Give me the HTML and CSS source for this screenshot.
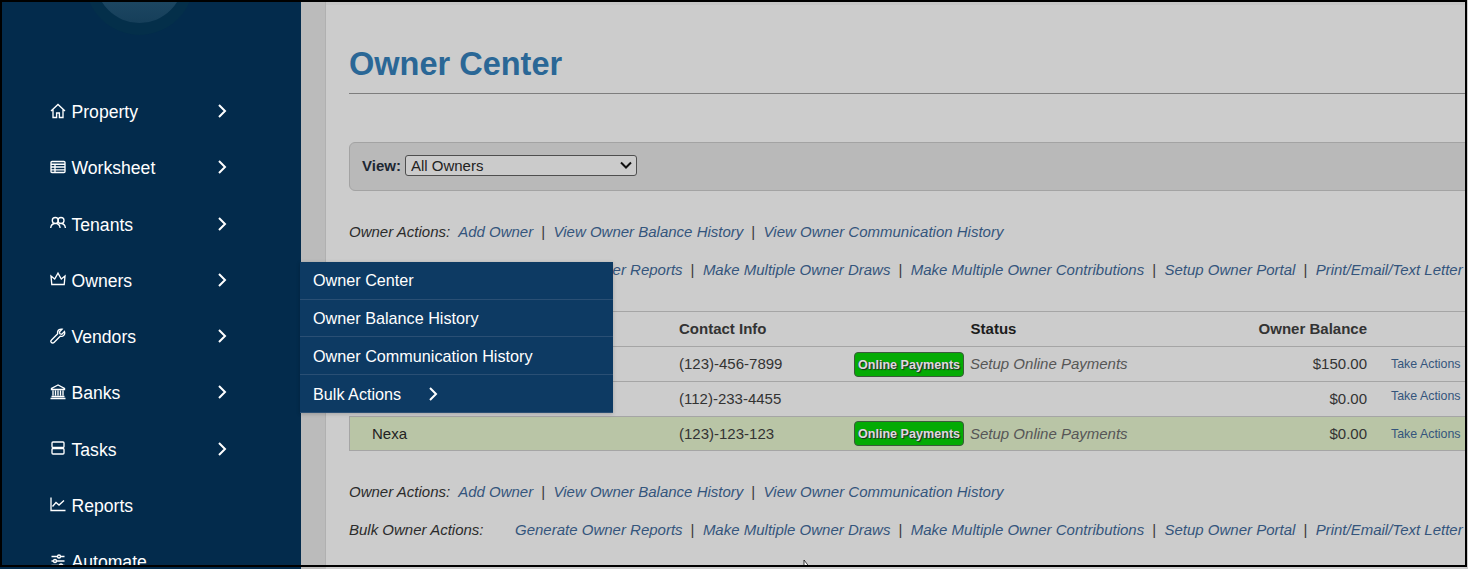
FILE: index.html
```html
<!DOCTYPE html>
<html lang="en">
<head>
<meta charset="utf-8">
<title>Owner Center</title>
<link rel="stylesheet" href="styles.css">
</head>
<body>
<div class="frame">
  <aside class="sidebar">
    <div class="logo">
      <svg class="logo-mark" width="299" height="82" viewBox="0 0 299 82">
        <defs><linearGradient id="disc" x1="0" y1="0" x2="0" y2="1"><stop offset=".5" stop-color="#234e6a"/><stop offset="1" stop-color="#163f5a"/></linearGradient></defs>
        <circle cx="137.500" cy="-21.400" r="54.400" fill="#042f4a"/>
        <circle cx="137.500" cy="-23" r="44" fill="url(#disc)"/>
      </svg>
    </div>
    <nav class="nav">
      <a class="nav-item"><span class="nav-label"><svg class="nav-icon" viewBox="0 0 16 16"><path d="M1 8 8 1.500 15 8M3 6.200V14.500h3.600V10h2.800v4.500H13V6.200"/></svg>Property</span><svg class="chev" viewBox="0 0 10 16"><path d="M2 2l6 6-6 6"/></svg></a>
      <a class="nav-item"><span class="nav-label"><svg class="nav-icon" viewBox="0 0 16 16"><rect x="1" y="2.500" width="14" height="11" rx="1"/><path d="M1 5.200h14M1 8h14M1 10.800h14M5 5.200v8.300"/></svg>Worksheet</span><svg class="chev" viewBox="0 0 10 16"><path d="M2 2l6 6-6 6"/></svg></a>
      <a class="nav-item"><span class="nav-label"><svg class="nav-icon" viewBox="0 0 16 16"><circle cx="5.300" cy="5.500" r="3"/><circle cx="11" cy="5.500" r="3"/><path d="M.7 13c.3-2.600 1.800-4.200 3.800-4.500M6.500 8.500c1.900.3 3.300 1.900 3.600 4.500M11.800 8.500c1.900.3 3.300 1.900 3.600 4.500"/></svg>Tenants</span><svg class="chev" viewBox="0 0 10 16"><path d="M2 2l6 6-6 6"/></svg></a>
      <a class="nav-item"><span class="nav-label"><svg class="nav-icon" viewBox="0 0 16 16"><path d="M1 5l.8 8.500h12.400L15 5l-3.700 3L8 2.200 4.700 8z"/></svg>Owners</span><svg class="chev" viewBox="0 0 10 16"><path d="M2 2l6 6-6 6"/></svg></a>
      <a class="nav-item"><span class="nav-label"><svg class="nav-icon" viewBox="0 0 16 16"><path d="M14.500 3.600 11.800 6.300 9.900 5.800 9.400 3.900 12.100 1.200C10 .700 8 1.800 7.600 3.800c-.1.700 0 1.300.1 1.900L1.500 11.900c-.8.800-.8 1.900-.1 2.600s1.800.7 2.600-.1l6.200-6.200c.6.200 1.300.2 1.900.1 2-.4 3.100-2.600 2.400-4.700z"/></svg>Vendors</span><svg class="chev" viewBox="0 0 10 16"><path d="M2 2l6 6-6 6"/></svg></a>
      <a class="nav-item"><span class="nav-label"><svg class="nav-icon" viewBox="0 0 16 16"><path d="M8 1 1.500 4.500v1h13v-1zM3 6.500v5M5.500 6.500v5M8 6.500v5M10.500 6.500v5M13 6.500v5M1.500 12.500h13M.5 14.500h15"/></svg>Banks</span><svg class="chev" viewBox="0 0 10 16"><path d="M2 2l6 6-6 6"/></svg></a>
      <a class="nav-item"><span class="nav-label"><svg class="nav-icon" viewBox="0 0 16 16"><rect x="2" y="2" width="12" height="5.500" rx="1"/><rect x="2" y="8.500" width="12" height="5.500" rx="1"/></svg>Tasks</span><svg class="chev" viewBox="0 0 10 16"><path d="M2 2l6 6-6 6"/></svg></a>
      <a class="nav-item"><span class="nav-label"><svg class="nav-icon" viewBox="0 0 16 16"><path d="M1 1.500v13h14.500M2.500 10.500 6 6.500l3 2.500 5-4.500"/></svg>Reports</span></a>
      <a class="nav-item"><span class="nav-label"><svg class="nav-icon" viewBox="0 0 16 16"><path d="M1.500 3.500h6M10.500 3.500h4M1.500 8h2M6.500 8h8M1.500 12.500h8M12.500 12.500h2"/><circle cx="9" cy="3.500" r="1.500"/><circle cx="5" cy="8" r="1.500"/><circle cx="11" cy="12.500" r="1.500"/></svg>Automate</span></a>
    </nav>
  </aside>
  <div class="gutter"></div>
  <main class="main">
    <div class="page">
      <h1 class="title">Owner Center</h1>
      <div class="view-bar">
        <label class="view-label" for="view">View:</label>
        <span class="select-wrap">
          <select class="view-select" id="view"><option>All Owners</option></select>
          <svg class="select-arrow" width="12" height="8" viewBox="0 0 12 8"><path d="M1 1.500l5 5 5-5"/></svg>
        </span>
      </div>
      <div class="actions-block">
        <p class="action-line"><span class="action-label">Owner Actions:</span><a class="action-link">Add Owner</a><span class="sep">|</span><a class="action-link">View Owner Balance History</a><span class="sep">|</span><a class="action-link">View Owner Communication History</a></p>
        <p class="action-line"><span class="action-label bulk">Bulk Owner Actions:</span><a class="action-link">Generate Owner Reports</a><span class="sep">|</span><a class="action-link">Make Multiple Owner Draws</a><span class="sep">|</span><a class="action-link">Make Multiple Owner Contributions</a><span class="sep">|</span><a class="action-link">Setup Owner Portal</a><span class="sep">|</span><a class="action-link">Print/Email/Text Letter</a></p>
      </div>
      <div class="table">
        <div class="row head">
          <div class="cell-name"></div>
          <div class="cell-contact">Contact Info</div>
          <div class="cell-status">Status</div>
          <div class="cell-balance">Owner Balance</div>
          <div class="cell-actions"></div>
        </div>
        <div class="row upper">
          <div class="cell-name"></div>
          <div class="cell-contact">(123)-456-7899</div>
          <div class="cell-status"><span class="pay-btn">Online Payments</span><em class="setup">Setup Online Payments</em></div>
          <div class="cell-balance">$150.00</div>
          <div class="cell-actions"><a>Take Actions</a></div>
        </div>
        <div class="row nudged">
          <div class="cell-name"></div>
          <div class="cell-contact">(112)-233-4455</div>
          <div class="cell-status"></div>
          <div class="cell-balance">$0.00</div>
          <div class="cell-actions raised"><a>Take Actions</a></div>
        </div>
        <div class="row selected">
          <div class="cell-name">Nexa</div>
          <div class="cell-contact">(123)-123-123</div>
          <div class="cell-status"><span class="pay-btn">Online Payments</span><em class="setup">Setup Online Payments</em></div>
          <div class="cell-balance">$0.00</div>
          <div class="cell-actions lowered"><a>Take Actions</a></div>
        </div>
      </div>
      <div class="actions-block">
        <p class="action-line"><span class="action-label">Owner Actions:</span><a class="action-link">Add Owner</a><span class="sep">|</span><a class="action-link">View Owner Balance History</a><span class="sep">|</span><a class="action-link">View Owner Communication History</a></p>
        <p class="action-line"><span class="action-label bulk">Bulk Owner Actions:</span><a class="action-link">Generate Owner Reports</a><span class="sep">|</span><a class="action-link">Make Multiple Owner Draws</a><span class="sep">|</span><a class="action-link">Make Multiple Owner Contributions</a><span class="sep">|</span><a class="action-link">Setup Owner Portal</a><span class="sep">|</span><a class="action-link">Print/Email/Text Letter</a></p>
      </div>
    </div>
  </main>
  <ul class="flyout">
    <li class="fly-item">Owner Center</li>
    <li class="fly-item">Owner Balance History</li>
    <li class="fly-item">Owner Communication History</li>
    <li class="fly-item">Bulk Actions<svg class="chev fly-chev" viewBox="0 0 10 16"><path d="M2 2l6 6-6 6"/></svg></li>
  </ul>
  <svg class="cursor" width="10" height="12" viewBox="0 0 10 12"><path d="M1 0v10l2.500-2.200H7z" fill="#fff" stroke="#111" stroke-width=".8"/></svg>
</div>
<div class="strip"><div class="strip-side"></div><div class="strip-gutter"></div></div>
</body>
</html>
```
FILE: styles.css
```css
* { box-sizing: border-box; }
html, body { margin: 0; padding: 0; }
body {
  width: 1468px;
  height: 569px;
  overflow: hidden;
  background: #ccc;
  font-family: "Liberation Sans", Arial, sans-serif;
  font-size: 15px;
  color: #222;
}
.frame {
  position: relative;
  display: flex;
  width: 1467px;
  height: 567px;
  border: 2px solid #000;
  overflow: hidden;
}
.sidebar {
  flex: 0 0 299px;
  background: #032b4c;
  color: #fff;
}
.logo { height: 82.5px; }
.logo-mark { display: block; }
.nav-item {
  display: flex;
  align-items: center;
  height: 56.25px;
  padding-left: 48px;
  font-size: 17.6px;
  color: #fff;
}
.nav-label {
  display: flex;
  align-items: center;
  gap: 5.5px;
  width: 167px;
}
.nav-icon {
  flex: 0 0 16px;
  width: 16px;
  height: 16px;
  margin-top: -4px;
  fill: none;
  stroke: #fff;
  stroke-width: 1.35;
}
.chev {
  width: 10px;
  height: 16px;
  margin-top: -3px;
  fill: none;
  stroke: #fff;
  stroke-width: 2;
}
.gutter {
  flex: 0 0 25px;
  background: #bbb;
  border-right: 1px solid #b0b0b0;
}
.main {
  flex: 1;
  min-width: 0;
  overflow: hidden;
  background: #ccc;
  border-top: 3px solid #c6c6c6;
}
.page {
  width: 1300px;
  padding-left: 23px;
}
.title {
  height: 89px;
  margin: 0 0 48px;
  padding-top: 38px;
  border-bottom: 1px solid #7d7d7d;
  font-size: 32.5px;
  line-height: 42px;
  font-weight: 700;
  color: #2a6796;
}
.view-bar {
  display: flex;
  align-items: center;
  gap: 4px;
  height: 49px;
  padding: 0 12px 2px;
  background: #b9b9b9;
  border: 1px solid #a3a3a3;
  border-radius: 6px;
}
.view-label { font-weight: 700; color: #1d2733; }
.select-wrap {
  position: relative;
  display: block;
  width: 232px;
  height: 21px;
}
.view-select {
  display: block;
  width: 100%;
  height: 100%;
  padding: 0 5px 1px;
  appearance: none;
  background: #cbcbcb;
  border: 1px solid #4e4e4e;
  border-radius: 3px;
  font-family: inherit;
  font-size: 15px;
  color: #222;
}
.select-arrow {
  position: absolute;
  right: 5px;
  top: 6px;
  fill: none;
  stroke: #111;
  stroke-width: 2;
}
.actions-block { margin-top: 21px; }
.action-line {
  display: flex;
  align-items: center;
  height: 38px;
  margin: 0;
  font-style: italic;
  white-space: nowrap;
}
.action-label { margin-right: 8px; color: #2b2b2b; }
.action-label.bulk { width: 156px; margin-right: 10px; }
.action-link { color: #34557c; }
.sep { margin: 0 8.4px 0 8px; font-style: normal; color: #3a3a3a; }
.table {
  margin-top: 23px;
  border-top: 1px solid #a5a5a5;
}
.row {
  display: grid;
  grid-template-columns: 330px 175px 278px 235px 1fr;
  align-items: center;
  height: 35px;
  border-bottom: 1px solid #a5a5a5;
}
.row:last-child { height: 34px; }
.row.nudged { padding-bottom: 2px; }
.row.head {
  padding-bottom: 2px;
  font-weight: 700;
  color: #1c1c1c;
}
.row.upper .cell-contact,
.row.upper .cell-balance,
.row.upper .setup { padding-bottom: 2px; }
.row.head .cell-status { justify-content: center; padding-left: 1px; }
.row.selected {
  background: #b9c5a6;
  box-shadow: inset 1px 0 0 #a5a5a5;
}
.row.selected .cell-name { padding-left: 23px; }
.cell-contact { color: #333; }
.cell-status {
  display: flex;
  align-items: center;
  justify-content: flex-start;
}
.pay-btn {
  display: block;
  flex: 0 0 110px;
  height: 25px;
  margin-right: 6px;
  background: #04ab04;
  border: 1px solid #3b5b3b;
  border-radius: 4px;
  font-size: 12.6px;
  font-weight: 700;
  line-height: 24px;
  text-align: center;
  white-space: nowrap;
  color: #dcdcdc;
  text-shadow: 1px 1px 1px #222, -.5px 0 0 #555;
}
.setup { color: #565656; }
.cell-balance { text-align: right; color: #333; }
.cell-actions {
  padding-left: 24px;
  font-size: 12.4px;
  white-space: nowrap;
  color: #34557c;
}
.cell-actions.raised { padding-bottom: 5px; }
.cell-actions.lowered { padding-top: 1px; }
.flyout {
  position: absolute;
  left: 298px;
  top: 260px;
  width: 313px;
  margin: 0;
  padding: 0;
  list-style: none;
  background: #0d3a63;
  border-bottom: 1px solid #2a4f74;
  box-shadow: 0 1px 4px rgba(0, 0, 0, .2);
  font-size: 16.2px;
  color: #fff;
}
.fly-item {
  display: flex;
  align-items: center;
  height: 37.5px;
  padding: 1px 0 0 13px;
  border-bottom: 1px solid #2a4f74;
}
.fly-item:nth-child(n+3) { padding-top: 2px; }
.fly-item:last-child { border-bottom: 0; }
.fly-chev { margin: -1px 0 0 27px; }
.cursor {
  position: absolute;
  left: 801px;
  top: 558px;
}
.strip { display: flex; height: 2px; }
.strip-side { width: 301px; background: #032b4c; }
.strip-gutter { width: 25px; background: #bbb; }
```
